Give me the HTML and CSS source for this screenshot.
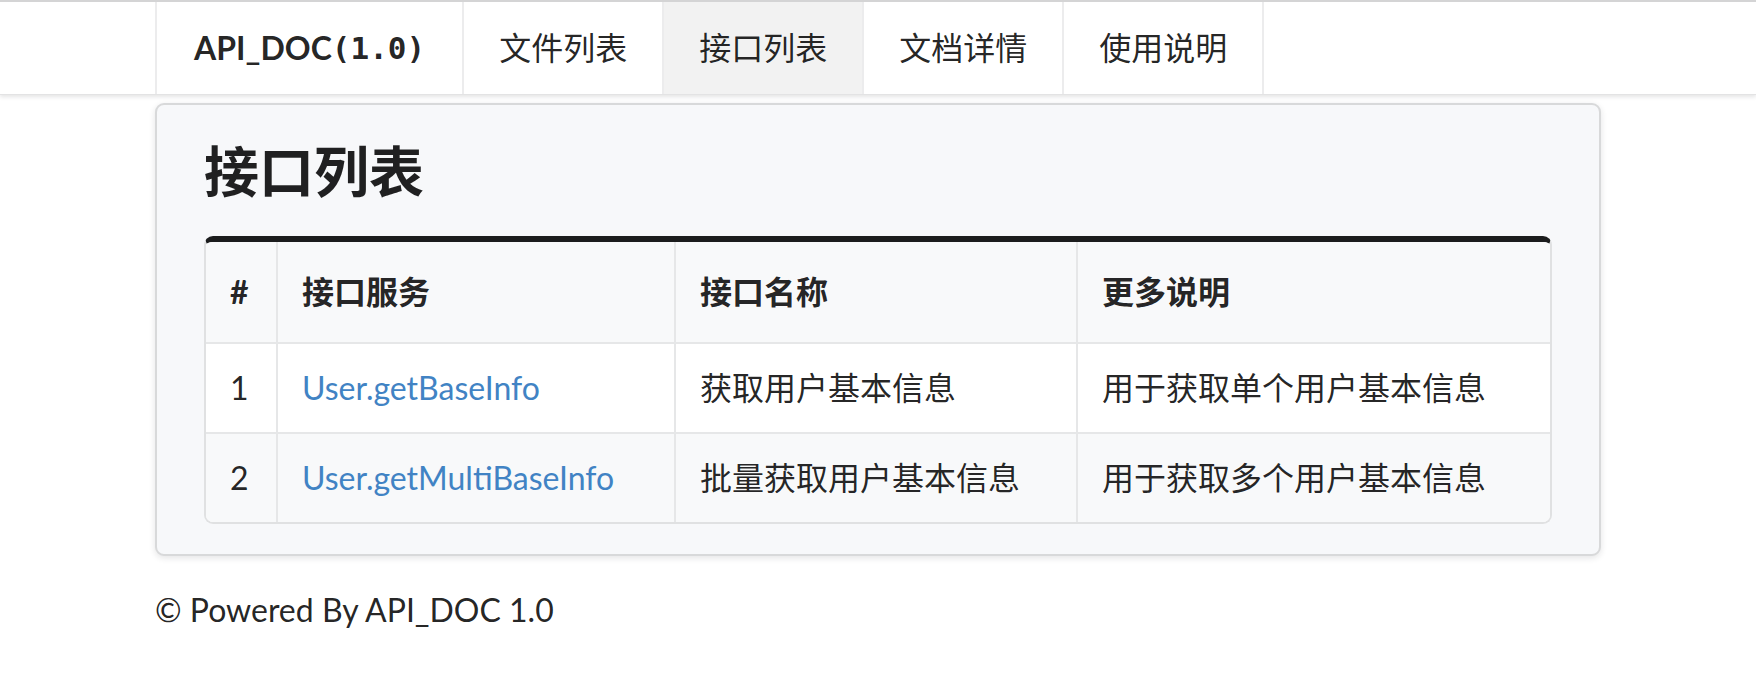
FILE: index.html
```html
<!DOCTYPE html>
<html lang="zh-CN">
<head>
<meta charset="utf-8">
<title>接口列表 - API_DOC</title>
<link rel="stylesheet" href="styles.css">
</head>
<body>
<div class="topbar">
  <nav class="container nav">
    <a class="item brand" href="#">API_DOC<span class="ver">(1.0)</span></a>
    <a class="item" href="#">文件列表</a>
    <a class="item active" href="#">接口列表</a>
    <a class="item" href="#">文档详情</a>
    <a class="item" href="#">使用说明</a>
  </nav>
</div>
<main class="container">
  <section class="segment">
    <h2 class="title">接口列表</h2>
    <table class="api-table">
      <thead>
        <tr>
          <th class="c-num">#</th>
          <th class="c-service">接口服务</th>
          <th class="c-name">接口名称</th>
          <th class="c-desc">更多说明</th>
        </tr>
      </thead>
      <tbody>
        <tr>
          <td>1</td>
          <td><a class="link" href="#">User.getBaseInfo</a></td>
          <td>获取用户基本信息</td>
          <td>用于获取单个用户基本信息</td>
        </tr>
        <tr>
          <td>2</td>
          <td><a class="link" href="#">User.getMultiBaseInfo</a></td>
          <td>批量获取用户基本信息</td>
          <td>用于获取多个用户基本信息</td>
        </tr>
      </tbody>
    </table>
  </section>
  <p class="footer">© Powered By API_DOC 1.0</p>
</main>
</body>
</html>
```

FILE: styles.css
```css
* { box-sizing: border-box; }

html, body {
  margin: 0;
  padding: 0;
  background: #ffffff;
}

body {
  font-family: Lato, "Noto Sans CJK SC", "Noto Sans", sans-serif;
  font-size: 32px;
  line-height: 1.4285;
  color: rgba(0, 0, 0, 0.87);
}

.container {
  width: 1446px;
  margin: 0 auto;
}

/* top menu */
.topbar {
  background: #ffffff;
  border-top: 2px solid #d4d4d5;
  border-bottom: 1px solid #e3e3e4;
  box-shadow: 0 2px 4px rgba(34, 36, 38, 0.12);
}

.nav {
  display: flex;
  height: 92px;
}

.item {
  display: flex;
  align-items: center;
  padding: 0 35px;
  border-right: 2px solid #ececed;
  color: rgba(0, 0, 0, 0.87);
  text-decoration: none;
  line-height: 1;
}

.item.brand {
  border-left: 2px solid #ececed;
  font-weight: 700;
  padding: 0 37px 0 37px;
}

.ver {
  font-family: "DejaVu Sans Mono", "Liberation Mono", monospace;
  font-weight: 700;
  font-size: 31px;
}

.item.active {
  background: #f2f2f2;
}

/* card */
.segment {
  margin-top: 8px;
  background: #f7f8fa;
  border: 2px solid #d8d9da;
  border-radius: 9px;
  box-shadow: 0 2px 6px rgba(34, 36, 38, 0.12);
  padding: 31px 47px 30px 47px;
}

.title {
  margin: 0 0 30px 0;
  font-size: 55px;
  font-weight: 700;
  line-height: 70px;
  color: rgba(0, 0, 0, 0.87);
}

/* table */
.api-table {
  width: 100%;
  border-collapse: separate;
  border-spacing: 0;
  border: 2px solid #e0e1e2;
  border-top: 6px solid #1b1c1d;
  border-radius: 9px;
  background: #ffffff;
  overflow: hidden;
}

.api-table th,
.api-table td {
  text-align: left;
  padding: 0 24px;
  border-left: 2px solid #e6e7e8;
  border-top: 2px solid #e6e7e8;
  line-height: 44px;
}

.api-table th:first-child,
.api-table td:first-child {
  border-left: none;
}

.api-table th {
  height: 100px;
  border-top: none;
  background: #f8f9fa;
  font-weight: 700;
}

.api-table td {
  height: 90px;
}

.api-table tbody tr:nth-child(2n) td {
  background: #f8f9fa;
}

.c-num { width: 70px; }
.c-service { width: 398px; }
.c-name { width: 402px; }

.link {
  color: #4183c4;
  text-decoration: none;
}

.footer {
  margin: 32px 0 0 0;
  font-size: 32px;
  line-height: 44px;
}
```
